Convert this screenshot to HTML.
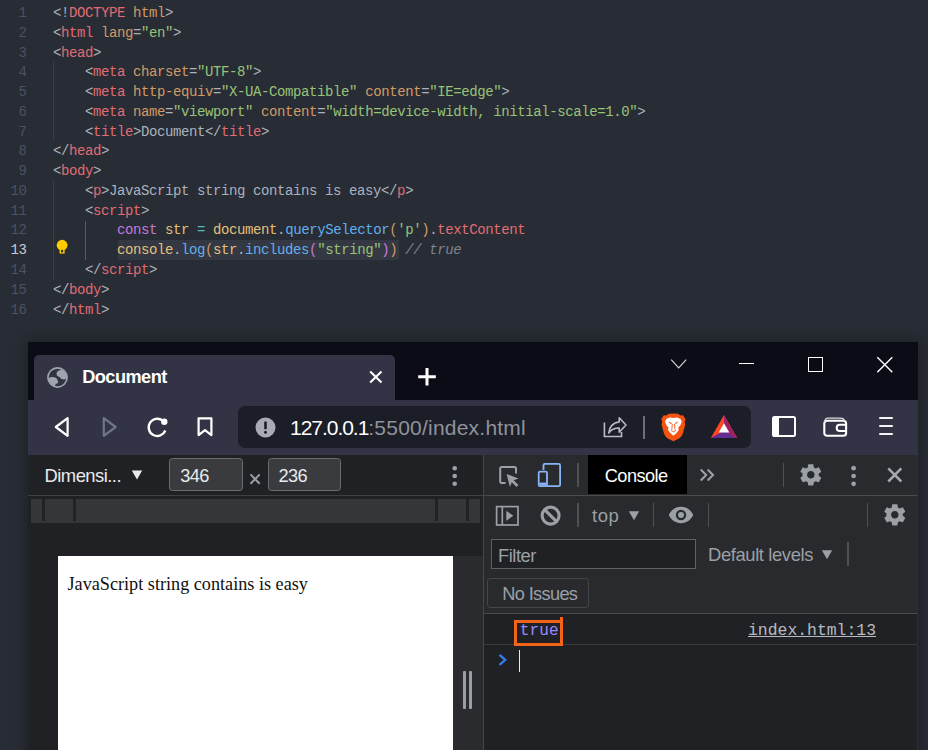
<!DOCTYPE html>
<html lang="en">
<head>
<meta charset="UTF-8">
<title>JavaScript string contains</title>
<style>
html,body{margin:0;padding:0;}
body{width:928px;height:750px;overflow:hidden;background:#282c34;position:relative;font-family:"Liberation Sans",sans-serif;}
.abs,.ln,.cl,#win *{position:absolute;}
#win span{position:static;}
/* editor */
.ln{left:0;width:26.5px;text-align:right;font:14px/19.8px "Liberation Mono",monospace;letter-spacing:-0.4px;color:#4b5263;}
.ln.cur{color:#c6ccd7;}
.cl{white-space:pre;font:14px/19.8px "Liberation Mono",monospace;letter-spacing:-0.4px;color:#abb2bf;}
.p{color:#abb2bf}.t{color:#e06c75}.a{color:#d19a66}.s{color:#98c379}.x{color:#abb2bf}
.k{color:#c678dd}.v{color:#e5c07b}.f{color:#61afef}.o{color:#56b6c2}.c{color:#7f848e;font-style:italic}
.b1{color:#d19a66}.b2{color:#c678dd}
.hlbox{position:absolute;left:118px;top:240.3px;width:280.5px;height:19.4px;background:#333842;}
.guide{position:absolute;width:1px;background:#3b4048;}
/* window */
#shadow{position:absolute;left:28px;top:342px;width:890px;height:420px;box-shadow:0 0 14px 2px rgba(0,0,0,.28);}
#win{position:absolute;left:28px;top:342px;width:890px;height:408px;background:#0c0c17;overflow:hidden;}
</style>
</head>
<body>

<div class="hlbox"></div>
<div class="ln" style="top:3.97px">1</div>
<div class="cl" style="top:3.97px;left:53px"><span class="p">&lt;!</span><span class="t">DOCTYPE</span><span class="x"> </span><span class="a">html</span><span class="p">&gt;</span></div>
<div class="ln" style="top:23.74px">2</div>
<div class="cl" style="top:23.74px;left:53px"><span class="p">&lt;</span><span class="t">html</span><span class="x"> </span><span class="a">lang</span><span class="p">=</span><span class="s">"en"</span><span class="p">&gt;</span></div>
<div class="ln" style="top:43.51px">3</div>
<div class="cl" style="top:43.51px;left:53px"><span class="p">&lt;</span><span class="t">head</span><span class="p">&gt;</span></div>
<div class="ln" style="top:63.28px">4</div>
<div class="cl" style="top:63.28px;left:85px"><span class="p">&lt;</span><span class="t">meta</span><span class="x"> </span><span class="a">charset</span><span class="p">=</span><span class="s">"UTF-8"</span><span class="p">&gt;</span></div>
<div class="ln" style="top:83.05px">5</div>
<div class="cl" style="top:83.05px;left:85px"><span class="p">&lt;</span><span class="t">meta</span><span class="x"> </span><span class="a">http-equiv</span><span class="p">=</span><span class="s">"X-UA-Compatible"</span><span class="x"> </span><span class="a">content</span><span class="p">=</span><span class="s">"IE=edge"</span><span class="p">&gt;</span></div>
<div class="ln" style="top:102.82px">6</div>
<div class="cl" style="top:102.82px;left:85px"><span class="p">&lt;</span><span class="t">meta</span><span class="x"> </span><span class="a">name</span><span class="p">=</span><span class="s">"viewport"</span><span class="x"> </span><span class="a">content</span><span class="p">=</span><span class="s">"width=device-width, initial-scale=1.0"</span><span class="p">&gt;</span></div>
<div class="ln" style="top:122.59px">7</div>
<div class="cl" style="top:122.59px;left:85px"><span class="p">&lt;</span><span class="t">title</span><span class="p">&gt;</span><span class="x">Document</span><span class="p">&lt;/</span><span class="t">title</span><span class="p">&gt;</span></div>
<div class="ln" style="top:142.36px">8</div>
<div class="cl" style="top:142.36px;left:53px"><span class="p">&lt;/</span><span class="t">head</span><span class="p">&gt;</span></div>
<div class="ln" style="top:162.13px">9</div>
<div class="cl" style="top:162.13px;left:53px"><span class="p">&lt;</span><span class="t">body</span><span class="p">&gt;</span></div>
<div class="ln" style="top:181.90px">10</div>
<div class="cl" style="top:181.90px;left:85px"><span class="p">&lt;</span><span class="t">p</span><span class="p">&gt;</span><span class="x">JavaScript string contains is easy</span><span class="p">&lt;/</span><span class="t">p</span><span class="p">&gt;</span></div>
<div class="ln" style="top:201.67px">11</div>
<div class="cl" style="top:201.67px;left:85px"><span class="p">&lt;</span><span class="t">script</span><span class="p">&gt;</span></div>
<div class="ln" style="top:221.44px">12</div>
<div class="cl" style="top:221.44px;left:117px"><span class="k">const</span><span class="x"> </span><span class="v">str</span><span class="x"> </span><span class="o">=</span><span class="x"> </span><span class="v">document</span><span class="p">.</span><span class="f">querySelector</span><span class="b1">(</span><span class="s">'p'</span><span class="b1">)</span><span class="p">.</span><span class="t">textContent</span></div>
<div class="ln cur" style="top:241.21px">13</div>
<div class="cl" style="top:241.21px;left:117px"><span><span class="v">console</span><span class="p">.</span><span class="f">log</span><span class="b1">(</span><span class="v">str</span><span class="p">.</span><span class="f">includes</span><span class="b2">(</span><span class="s">"string"</span><span class="b2">)</span><span class="b1">)</span></span><span class="x"> </span><span class="c">// true</span></div>
<div class="ln" style="top:260.98px">14</div>
<div class="cl" style="top:260.98px;left:85px"><span class="p">&lt;/</span><span class="t">script</span><span class="p">&gt;</span></div>
<div class="ln" style="top:280.75px">15</div>
<div class="cl" style="top:280.75px;left:53px"><span class="p">&lt;/</span><span class="t">body</span><span class="p">&gt;</span></div>
<div class="ln" style="top:300.52px">16</div>
<div class="cl" style="top:300.52px;left:53px"><span class="p">&lt;/</span><span class="t">html</span><span class="p">&gt;</span></div>
<!-- editor indent guides -->
<div class="guide" style="left:53px;top:61.500px;height:79.500px"></div>
<div class="guide" style="left:53px;top:180.600px;height:99px"></div>
<div class="guide" style="left:85px;top:220.500px;height:39.500px;background:#555b69"></div>
<!-- lightbulb -->
<svg class="abs" style="left:54px;top:238px" width="16" height="18" viewBox="0 0 16 18"><circle cx="8.1" cy="7.2" r="5.400" fill="#fc0"/><path d="M5.6 9.500h5v6.100h-5z" fill="#fc0"/><rect x="7" y="11.800" width="2.200" height="2.600" fill="#3a3320"/></svg>

<!-- browser window -->
<div id="shadow"></div>
<div id="win"></div>
<div class="abs" style="left:34px;top:355px;width:360.5px;height:46px;background:#323445;border-radius:5px 5px 0 0"></div>
<div class="abs" style="left:28px;top:400px;width:890px;height:54.5px;background:#323445"></div>

<!-- globe -->
<svg class="abs" style="left:47.400px;top:366.600px" width="21" height="21" viewBox="0 0 21 21"><defs><clipPath id="gc"><circle cx="10.500" cy="10.500" r="9.200"/></clipPath></defs><circle cx="10.500" cy="10.500" r="10.400" fill="#a1a4af"/><circle cx="10.500" cy="10.500" r="8.700" fill="#323445"/><g clip-path="url(#gc)" fill="#a1a4af"><ellipse cx="14.200" cy="6.700" rx="4.700" ry="3.600"/><circle cx="17" cy="9.200" r="3.200"/><circle cx="14.800" cy="9.800" r="2"/><ellipse cx="5.400" cy="13.800" rx="5.200" ry="3.900"/><circle cx="5.600" cy="17" r="3"/><circle cx="9.400" cy="15" r="1.800"/></g></svg>
<div class="abs" style="left:82.200px;top:367.100px;font-weight:700;font-size:18.200px;line-height:20px;color:#fff;white-space:pre;letter-spacing:-0.55px">Document</div>
<!-- tab close -->
<svg class="abs" style="left:368px;top:369px" width="16" height="16" viewBox="0 0 16 16"><path d="M2.200 2.500l11.300 11M13.500 2.500l-11.300 11" stroke="#fff" stroke-width="2.100" fill="none"/></svg>
<!-- plus -->
<svg class="abs" style="left:417px;top:367px" width="20" height="20" viewBox="0 0 20 20"><path d="M10 1v17.500M1.200 9.800h17.600" stroke="#fff" stroke-width="3" fill="none"/></svg>
<!-- chevron -->
<svg class="abs" style="left:670px;top:358px" width="18" height="12" viewBox="0 0 18 12"><path d="M1.200 1.700l7.500 8.300 7.500-8.300" stroke="#d4d4da" stroke-width="1.150" fill="none"/></svg>
<!-- window controls -->
<div class="abs" style="left:739px;top:362.5px;width:15px;height:1.4px;background:#fff"></div>
<div class="abs" style="left:808px;top:357px;width:12.600px;height:12.600px;border:1.3px solid #fff"></div>
<svg class="abs" style="left:876px;top:356px" width="18" height="18" viewBox="0 0 18 18"><path d="M1.300 1.300l15 15M16.300 1.300l-15 15" stroke="#fff" stroke-width="1.400" fill="none"/></svg>

<!-- nav icons -->
<svg class="abs" style="left:52px;top:415px" width="20" height="24" viewBox="0 0 20 24"><path d="M15.600 3.200v17.600L3.800 12z" stroke="#fff" stroke-width="2.200" fill="none" stroke-linejoin="round"/></svg>
<svg class="abs" style="left:100px;top:415px" width="20" height="24" viewBox="0 0 20 24"><path d="M3.800 3.200v17.600L15.600 12z" stroke="#71748a" stroke-width="2.200" fill="none" stroke-linejoin="round"/></svg>
<svg class="abs" style="left:145px;top:414px" width="26" height="26" viewBox="0 0 26 26"><path d="M20.300 16.500a8.600 8.600 0 1 1-2.600-9.800" stroke="#fff" stroke-width="2.300" fill="none"/><circle cx="19.300" cy="7.700" r="3.200" fill="#fff"/></svg>
<svg class="abs" style="left:195px;top:415px" width="20" height="24" viewBox="0 0 20 24"><path d="M3.600 3.300h12.800v16.800l-6.400-5-6.400 5z" stroke="#fff" stroke-width="2.200" fill="none" stroke-linejoin="round"/></svg>

<!-- url bar -->
<div class="abs" style="left:238px;top:406px;width:512.5px;height:41.5px;background:#1c1e27;border-radius:7px"></div>
<svg class="abs" style="left:254.5px;top:416.500px" width="21" height="21" viewBox="0 0 21 21"><circle cx="10.500" cy="10.500" r="10" fill="#a9abb4"/><rect x="9.200" y="4.600" width="2.600" height="7.600" rx="0.400" fill="#1c1e27"/><circle cx="10.500" cy="15.200" r="1.500" fill="#1c1e27"/></svg>
<div class="abs" style="left:290px;top:415.800px;font-size:21px;line-height:24px;color:#fff;white-space:pre"><span style="letter-spacing:-1.03px">127.0.0.1</span><span style="color:#8f929c;letter-spacing:0.22px">:5500/index.html</span></div>
<!-- share -->
<svg class="abs" style="left:602px;top:415px" width="27" height="25" viewBox="0 0 27 25"><path d="M2.400 7.500V21.500H19.500V17" stroke="#b9bbc4" stroke-width="1.600" fill="none"/><path d="M17.200 2.800L24 10l-6.800 7.200V13c-5 0-8 1.400-10.400 5 .4-6 4.200-10.600 10.400-11z" stroke="#b9bbc4" stroke-width="1.600" fill="none" stroke-linejoin="round"/></svg>
<div class="abs" style="left:643.3px;top:415.500px;width:1.600px;height:23px;background:#6c6e7a"></div>
<!-- brave lion -->
<svg class="abs" style="left:659.500px;top:412.500px" width="27" height="29" viewBox="0 0 27 29"><path d="M13.400.500L18 .700l2.500 1.900 2.500-.300 2.600 3.900-1 2.800.700 2.500-2.500 9c-.800 2.300-2 3.700-3.800 4.900l-5.600 2.900-5.600-2.900c-1.800-1.200-3-2.600-3.800-4.900l-2.500-9 .700-2.500-1-2.800 2.600-3.900 2.500.300L8.800.700z" fill="#f4520e"/><path d="M13.400 4.900l3.800-.500 3.300 1.700 1.300 2.500-1.500 4-2 1.800.500 2.700-2.300 3-3.100 2.600-3.100-2.600-2.300-3 .500-2.700-2-1.800-1.500-4 1.300-2.500 3.300-1.700z" fill="#fff"/><path d="M8 8.600l4.200 1.300-1.300 1.200zM18.800 8.600l-4.200 1.300 1.300 1.200z" fill="#f4520e"/><path d="M12.300 11l-.500 5.500M14.500 11l.500 5.500M10.800 17.300l2.600 1.500 2.600-1.500" stroke="#f4520e" stroke-width=".900" fill="none"/></svg>
<!-- BAT -->
<svg class="abs" style="left:710px;top:414px" width="28" height="25" viewBox="0 0 28 25"><path d="M14 1L.8 24h26.400z" fill="#ff4724"/><path d="M14 1L27.200 24H.8l6-3h14.400z" fill="#9e1f63" opacity="0"/><path d="M.8 24l13.200-7.600L27.200 24z" fill="#662d91"/><path d="M14 1v15.400L27.200 24z" fill="#9e1f63"/><path d="M14 9.200l5.300 9.200H8.700z" fill="#fff"/></svg>
<!-- sidebar icon -->
<div class="abs" style="left:772px;top:415.5px;width:19.600px;height:17.600px;border:2.200px solid #fff;border-radius:2.500px"></div>
<div class="abs" style="left:773px;top:416.5px;width:6.300px;height:20px;background:#fff"></div>
<!-- wallet -->
<svg class="abs" style="left:822px;top:415px" width="27" height="24" viewBox="0 0 27 24"><rect x="2.300" y="5.800" width="21.800" height="15" rx="2.800" stroke="#fff" stroke-width="2.100" fill="none"/><path d="M2.600 7.500c0-2.600 1.200-4.300 3.400-4.300h12.500c2.400 0 3.600 1.200 3.900 2.800" stroke="#d9dae0" stroke-width="1.300" fill="none"/><path d="M24.100 9.800h-6.300a3.100 3.100 0 0 0 0 6.200h6.300" stroke="#fff" stroke-width="2" fill="none"/></svg>
<!-- menu -->
<div class="abs" style="left:879px;top:417px;width:14px;height:2px;background:#f4f4f6;border-radius:1px"></div>
<div class="abs" style="left:879px;top:425px;width:14px;height:2px;background:#f4f4f6;border-radius:1px"></div>
<div class="abs" style="left:879px;top:433px;width:14px;height:2px;background:#f4f4f6;border-radius:1px"></div>

<!-- devtools left pane -->
<div class="abs" style="left:28px;top:454.5px;width:455px;height:296px;background:#202124"></div>
<div class="abs" style="left:28px;top:494.700px;width:890px;height:1.200px;background:#3f4044"></div>
<div class="abs" style="left:44.500px;top:464.600px;font-size:18.400px;line-height:22px;color:#e8eaed;white-space:pre;letter-spacing:-0.52px">Dimensi...</div>
<svg class="abs" style="left:131px;top:469px" width="12" height="12" viewBox="0 0 12 12"><path d="M.8 1.500h10.400L6 10.600z" fill="#e8eaed"/></svg>
<div class="abs" style="left:168.800px;top:458.300px;width:72.400px;height:30.500px;border:1px solid #6b6d71;background:#3a3b3e;border-radius:3.500px"></div>
<div class="abs" style="left:180.300px;top:464.500px;font-size:18.200px;line-height:22px;color:#e8eaed;letter-spacing:-0.7px">346</div>
<svg class="abs" style="left:249px;top:472.500px" width="13" height="13" viewBox="0 0 13 13"><path d="M1.500 1.400l9.200 9.400M10.700 1.400l-9.200 9.400" stroke="#9a9da2" stroke-width="2" fill="none"/></svg>
<div class="abs" style="left:267.500px;top:458.300px;width:71.500px;height:30.500px;border:1px solid #6b6d71;background:#3a3b3e;border-radius:3.500px"></div>
<div class="abs" style="left:278.500px;top:464.500px;font-size:18.200px;line-height:22px;color:#e8eaed;letter-spacing:-0.62px">236</div>
<svg class="abs" style="left:451px;top:464px" width="8" height="24" viewBox="0 0 8 24"><circle cx="3.700" cy="4.200" r="2.300" fill="#9aa0a6"/><circle cx="3.700" cy="12" r="2.300" fill="#9aa0a6"/><circle cx="3.700" cy="19.800" r="2.300" fill="#9aa0a6"/></svg>
<!-- ruler bar -->
<div class="abs" style="left:31px;top:498.500px;width:449px;height:24px;background:#35363a"></div>
<div class="abs" style="left:42.300px;top:498.500px;width:2.600px;height:22px;background:#212226"></div>
<div class="abs" style="left:73.200px;top:498.500px;width:2.600px;height:22px;background:#212226"></div>
<div class="abs" style="left:435.200px;top:498.500px;width:2.600px;height:22px;background:#212226"></div>
<div class="abs" style="left:466px;top:498.500px;width:2.600px;height:22px;background:#212226"></div>
<!-- page -->
<div class="abs" style="left:58px;top:555.700px;width:395.200px;height:195px;background:#fff"></div>
<div class="abs" style="left:67.500px;top:574.200px;font-family:'Liberation Serif',serif;font-size:18.190px;line-height:21px;color:#111;white-space:pre">JavaScript string contains is easy</div>
<div class="abs" style="left:453.200px;top:555.700px;width:29.500px;height:195px;background:#2a2b2e"></div>
<div class="abs" style="left:463.300px;top:671px;width:3px;height:38px;background:#9b9ea3;border-radius:1px"></div>
<div class="abs" style="left:469.200px;top:671px;width:3px;height:38px;background:#9b9ea3;border-radius:1px"></div>
<div class="abs" style="left:482.600px;top:454.500px;width:1.500px;height:296px;background:#46474b"></div>

<!-- devtools right pane -->
<div class="abs" style="left:484px;top:454.500px;width:434px;height:159.500px;background:#292a2d"></div>
<div class="abs" style="left:484px;top:614px;width:434px;height:136px;background:#202124"></div>
<div class="abs" style="left:484px;top:494.700px;width:434px;height:1.200px;background:#4a4b4f"></div>
<div class="abs" style="left:484px;top:613.300px;width:434px;height:1.200px;background:#4a4b4f"></div>
<div class="abs" style="left:484px;top:643.800px;width:434px;height:1.200px;background:#3a3b3e"></div>
<!-- inspect icon -->
<svg class="abs" style="left:497px;top:464px" width="24" height="24" viewBox="0 0 24 24"><path d="M19 9.500V4.400a1.400 1.400 0 0 0-1.400-1.400H4.600a1.400 1.400 0 0 0-1.400 1.400v13.200a1.400 1.400 0 0 0 1.400 1.400h4" stroke="#9aa0a6" stroke-width="2" fill="none"/><path d="M9.600 10l12 4.400-4.900 1.900 4.700 4.700-1.900 1.900-4.700-4.700-1.900 4.900z" fill="#9aa0a6"/></svg>
<!-- device icon -->
<svg class="abs" style="left:536px;top:461px" width="27" height="28" viewBox="0 0 27 28"><path d="M7.500 9V4.200a1.400 1.400 0 0 1 1.400-1.400h13.800a1.400 1.400 0 0 1 1.400 1.400v19.600a1.400 1.400 0 0 1-1.400 1.400H11" stroke="#8ab4f8" stroke-width="1.800" fill="none"/><rect x="2.700" y="10.700" width="8.300" height="14.500" rx="1.200" stroke="#8ab4f8" stroke-width="1.800" fill="none"/><rect x="3.500" y="21.600" width="6.600" height="2.800" fill="#8ab4f8"/></svg>
<div class="abs" style="left:577.400px;top:463px;width:1.300px;height:23.500px;background:#4e5054"></div>
<!-- console tab -->
<div class="abs" style="left:588px;top:455px;width:99px;height:39.200px;background:#000"></div>
<div class="abs" style="left:604.700px;top:464.600px;font-size:18.200px;line-height:22px;color:#fff;letter-spacing:-0.53px">Console</div>
<svg class="abs" style="left:699px;top:468px" width="16" height="14" viewBox="0 0 16 14"><path d="M1.800 1.600l5.400 5.400-5.400 5.400M8.600 1.600l5.400 5.400-5.400 5.400" stroke="#9aa0a6" stroke-width="2.100" fill="none"/></svg>
<div class="abs" style="left:783px;top:463px;width:1.300px;height:23.500px;background:#4e5054"></div>
<!-- gear 1 placeholder -->
<svg class="abs gear" style="left:798.200px;top:461.950px" width="25.600" height="25.600" viewBox="0 0 24 24"><path fill="#9aa0a6" d="M19.430 12.980c.04-.32.070-.64.070-.98s-.03-.66-.07-.98l2.110-1.650c.19-.15.240-.42.120-.64l-2-3.460c-.12-.22-.39-.3-.61-.22l-2.490 1c-.52-.4-1.080-.73-1.690-.98l-.38-2.650C14.460 2.180 14.250 2 14 2h-4c-.25 0-.46.180-.49.420l-.38 2.650c-.61.250-1.170.59-1.690.98l-2.490-1c-.23-.09-.49 0-.61.220l-2 3.460c-.13.220-.07.490.12.640l2.110 1.650c-.4.320-.7.650-.7.980s.3.660.7.980l-2.110 1.650c-.19.150-.24.420-.12.640l2 3.460c.12.220.39.300.61.220l2.490-1c.52.400 1.080.73 1.690.98l.38 2.650c.3.240.24.420.49.420h4c.25 0 .46-.18.490-.42l.38-2.650c.61-.25 1.170-.59 1.690-.98l2.490 1c.23.090.49 0 .61-.22l2-3.460c.12-.22.070-.49-.12-.64l-2.110-1.650zM12 15.500c-1.930 0-3.500-1.570-3.500-3.500s1.570-3.500 3.500-3.500 3.500 1.570 3.500 3.500-1.570 3.500-3.500 3.500z"/></svg>
<svg class="abs" style="left:850px;top:464px" width="8" height="24" viewBox="0 0 8 24"><circle cx="3.600" cy="4.200" r="2.350" fill="#9aa0a6"/><circle cx="3.600" cy="12" r="2.350" fill="#9aa0a6"/><circle cx="3.600" cy="19.800" r="2.350" fill="#9aa0a6"/></svg>
<svg class="abs" style="left:886px;top:466px" width="18" height="18" viewBox="0 0 18 18"><path d="M2.300 2.300l13 13.200M15.300 2.300l-13 13.200" stroke="#a4a9af" stroke-width="2.500" fill="none"/></svg>

<!-- console toolbar -->
<svg class="abs" style="left:495px;top:505px" width="25" height="22" viewBox="0 0 25 22"><rect x="1.600" y="1.600" width="21.400" height="18.400" stroke="#9aa0a6" stroke-width="1.700" fill="none"/><path d="M7.300 1.600v18.400" stroke="#9aa0a6" stroke-width="1.700"/><path d="M11.300 5.800l7 5-7 5z" fill="#9aa0a6"/></svg>
<svg class="abs" style="left:540px;top:505px" width="22" height="22" viewBox="0 0 22 22"><circle cx="10.600" cy="10.600" r="8.500" stroke="#9aa0a6" stroke-width="3.100" fill="none"/><path d="M4.600 4.600l12 12" stroke="#9aa0a6" stroke-width="3.100"/></svg>
<div class="abs" style="left:577.400px;top:503px;width:1.300px;height:23.500px;background:#4e5054"></div>
<div class="abs" style="left:592px;top:505.100px;font-size:18.500px;line-height:22px;color:#9aa0a6;letter-spacing:0.5px">top</div>
<svg class="abs" style="left:628px;top:510px" width="12" height="12" viewBox="0 0 12 12"><path d="M.8 1.200h10.400L6 10.200z" fill="#9aa0a6"/></svg>
<div class="abs" style="left:652.500px;top:503px;width:1.300px;height:23.500px;background:#4e5054"></div>
<svg class="abs" style="left:668px;top:506px" width="26" height="18" viewBox="0 0 26 18"><path d="M13 .8C7.500.8 3 4.200.8 9c2.200 4.800 6.700 8.200 12.200 8.200S23 13.800 25.200 9C23 4.200 18.500.8 13 .8z" fill="#9aa0a6"/><circle cx="13" cy="9" r="5.200" fill="#292a2d"/><circle cx="13" cy="9" r="3" fill="#9aa0a6"/></svg>
<div class="abs" style="left:707.500px;top:503px;width:1.300px;height:23.500px;background:#4e5054"></div>
<div class="abs" style="left:867px;top:503px;width:1.300px;height:23.500px;background:#4e5054"></div>
<svg class="abs gear" style="left:881.950px;top:502.200px" width="25.600" height="25.600" viewBox="0 0 24 24"><path fill="#9aa0a6" d="M19.430 12.980c.04-.32.070-.64.070-.98s-.03-.66-.07-.98l2.110-1.650c.19-.15.240-.42.120-.64l-2-3.460c-.12-.22-.39-.3-.61-.22l-2.490 1c-.52-.4-1.080-.73-1.690-.98l-.38-2.650C14.460 2.180 14.250 2 14 2h-4c-.25 0-.46.180-.49.420l-.38 2.650c-.61.250-1.170.59-1.690.98l-2.490-1c-.23-.09-.49 0-.61.220l-2 3.460c-.13.220-.07.490.12.640l2.110 1.650c-.4.320-.7.650-.7.980s.3.660.7.980l-2.110 1.650c-.19.150-.24.420-.12.640l2 3.460c.12.220.39.300.61.220l2.490-1c.52.400 1.080.73 1.690.98l.38 2.650c.3.240.24.420.49.420h4c.25 0 .46-.18.490-.42l.38-2.650c.61-.25 1.170-.59 1.690-.98l2.490 1c.23.090.49 0 .61-.22l2-3.460c.12-.22.070-.49-.12-.64l-2.110-1.650zM12 15.500c-1.930 0-3.500-1.570-3.500-3.500s1.570-3.500 3.500-3.500 3.500 1.570 3.500 3.500-1.570 3.500-3.500 3.500z"/></svg>

<!-- filter row -->
<div class="abs" style="left:491px;top:538.800px;width:202.500px;height:28.500px;border:1.300px solid #5f6165;background:#202124"></div>
<div class="abs" style="left:498px;top:544.600px;font-size:18.400px;line-height:22px;color:#9aa0a6;letter-spacing:-0.48px">Filter</div>
<div class="abs" style="left:708px;top:543.900px;font-size:18.400px;line-height:22px;color:#9aa0a6;white-space:pre;letter-spacing:-0.385px">Default levels</div>
<svg class="abs" style="left:821px;top:549px" width="12" height="12" viewBox="0 0 12 12"><path d="M.8 1.200h10.400L6 10.200z" fill="#9aa0a6"/></svg>
<div class="abs" style="left:847.400px;top:542px;width:1.300px;height:23.500px;background:#4e5054"></div>
<!-- no issues -->
<div class="abs" style="left:487.300px;top:578.200px;width:99.500px;height:27.800px;border:1.200px solid #46474b;border-radius:3.500px"></div>
<div class="abs" style="left:502.300px;top:582.500px;font-size:18.200px;line-height:22px;color:#9aa0a6;white-space:pre;letter-spacing:-0.65px">No Issues</div>

<!-- console message -->
<div class="abs" style="left:519.800px;top:620.300px;font-family:'Liberation Mono',monospace;font-size:16.040px;line-height:22px;color:#9d87ff;letter-spacing:0.1px">true</div>
<div class="abs" style="left:513.500px;top:619.900px;width:43.300px;height:20.300px;border:3px solid #f26418"></div>
<div class="abs" style="left:560px;top:617.300px;width:2.800px;height:4px;background:#f26418"></div>
<div class="abs" style="left:748px;top:620.200px;font-family:'Liberation Mono',monospace;font-size:16.410px;line-height:22px;color:#b6bac0;text-decoration:underline;white-space:pre">index.html:13</div>
<svg class="abs" style="left:497px;top:653px" width="12" height="14" viewBox="0 0 12 14"><path d="M2.500 1.800l5.800 5-5.800 5" stroke="#367cf1" stroke-width="2.200" fill="none"/></svg>
<div class="abs" style="left:519px;top:650px;width:1.300px;height:22px;background:#e8eaed"></div>
<div class="abs" style="left:917px;top:454.500px;width:1px;height:296px;background:#2d2e32"></div>

</body>
</html>
